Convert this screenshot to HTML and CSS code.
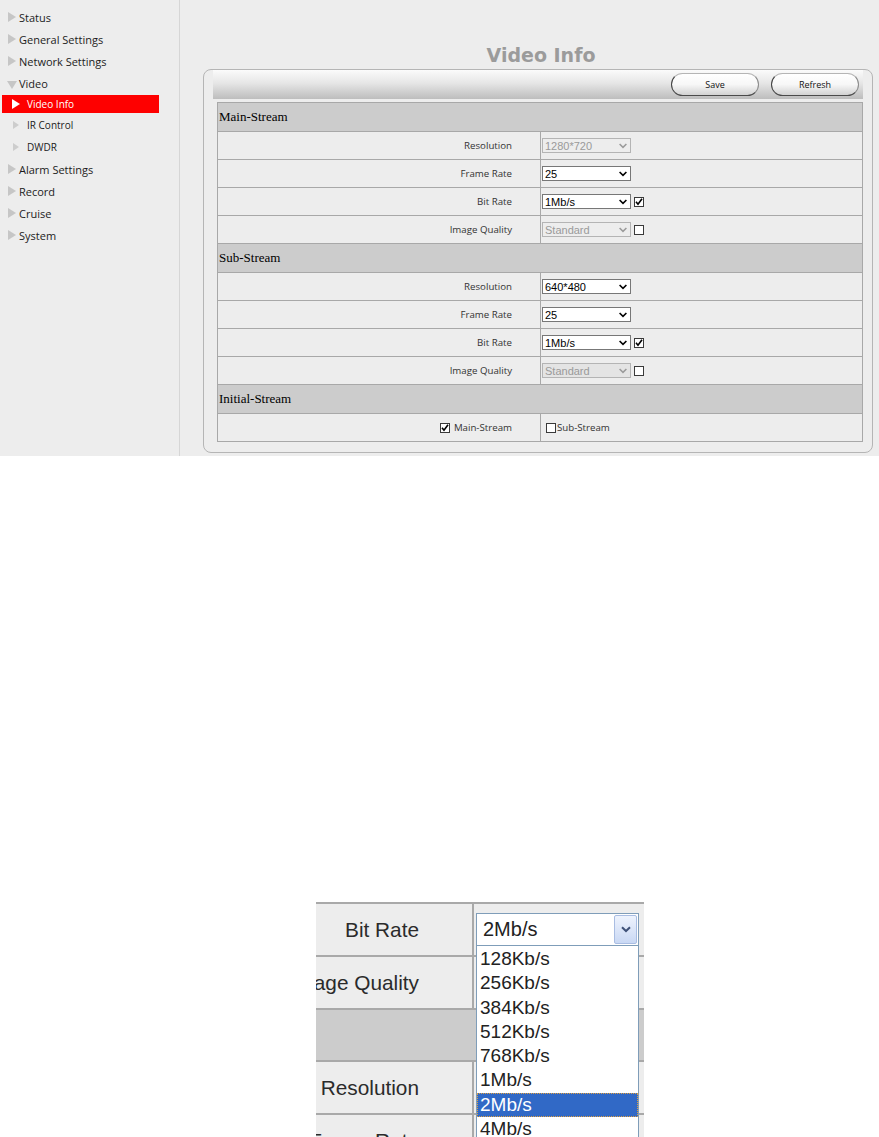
FILE: index.html
```html
<!DOCTYPE html>
<html>
<head>
<meta charset="utf-8">
<title>Video Info</title>
<link rel="stylesheet" href="styles.css">
</head>
<body>
<div class="app">
  <nav class="sidebar">
    <ul class="menu">
      <li class="item"><span class="tri"></span>Status</li>
      <li class="item"><span class="tri"></span>General Settings</li>
      <li class="item"><span class="tri"></span>Network Settings</li>
      <li class="item"><span class="tri tri-down"></span>Video</li>
      <li class="item sub active"><span class="tri"></span>Video Info</li>
      <li class="item sub"><span class="tri"></span>IR Control</li>
      <li class="item sub"><span class="tri"></span>DWDR</li>
      <li class="item"><span class="tri"></span>Alarm Settings</li>
      <li class="item"><span class="tri"></span>Record</li>
      <li class="item"><span class="tri"></span>Cruise</li>
      <li class="item"><span class="tri"></span>System</li>
    </ul>
  </nav>
  <main class="content">
    <h1 class="title">Video Info</h1>
    <section class="panel">
      <div class="toolbar">
        <button class="btn">Save</button>
        <button class="btn">Refresh</button>
      </div>
      <div class="grid">
        <div class="sect">Main-Stream</div>
        <div class="row">
          <div class="lbl">Resolution</div>
          <div class="val"><span class="sel disabled">1280*720<svg class="chev" width="8" height="6" viewBox="0 0 8 6"><path d="M0.6 1 L4 4.4 L7.4 1" fill="none" stroke="#9a9a9a" stroke-width="1.5"/></svg></span></div>
        </div>
        <div class="row">
          <div class="lbl">Frame Rate</div>
          <div class="val"><span class="sel">25<svg class="chev" width="8" height="6" viewBox="0 0 8 6"><path d="M0.6 1 L4 4.4 L7.4 1" fill="none" stroke="#000" stroke-width="1.6"/></svg></span></div>
        </div>
        <div class="row">
          <div class="lbl">Bit Rate</div>
          <div class="val"><span class="sel">1Mb/s<svg class="chev" width="8" height="6" viewBox="0 0 8 6"><path d="M0.6 1 L4 4.4 L7.4 1" fill="none" stroke="#000" stroke-width="1.6"/></svg></span><span class="cb"><svg width="8" height="8" viewBox="0 0 8 8"><path d="M1 3.8 L3 6.3 L7 0.8" fill="none" stroke="#000" stroke-width="1.6"/></svg></span></div>
        </div>
        <div class="row">
          <div class="lbl">Image Quality</div>
          <div class="val"><span class="sel disabled">Standard<svg class="chev" width="8" height="6" viewBox="0 0 8 6"><path d="M0.6 1 L4 4.4 L7.4 1" fill="none" stroke="#9a9a9a" stroke-width="1.5"/></svg></span><span class="cb"></span></div>
        </div>
        <div class="sect">Sub-Stream</div>
        <div class="row">
          <div class="lbl">Resolution</div>
          <div class="val"><span class="sel">640*480<svg class="chev" width="8" height="6" viewBox="0 0 8 6"><path d="M0.6 1 L4 4.4 L7.4 1" fill="none" stroke="#000" stroke-width="1.6"/></svg></span></div>
        </div>
        <div class="row">
          <div class="lbl">Frame Rate</div>
          <div class="val"><span class="sel">25<svg class="chev" width="8" height="6" viewBox="0 0 8 6"><path d="M0.6 1 L4 4.4 L7.4 1" fill="none" stroke="#000" stroke-width="1.6"/></svg></span></div>
        </div>
        <div class="row">
          <div class="lbl">Bit Rate</div>
          <div class="val"><span class="sel">1Mb/s<svg class="chev" width="8" height="6" viewBox="0 0 8 6"><path d="M0.6 1 L4 4.4 L7.4 1" fill="none" stroke="#000" stroke-width="1.6"/></svg></span><span class="cb"><svg width="8" height="8" viewBox="0 0 8 8"><path d="M1 3.8 L3 6.3 L7 0.8" fill="none" stroke="#000" stroke-width="1.6"/></svg></span></div>
        </div>
        <div class="row">
          <div class="lbl">Image Quality</div>
          <div class="val"><span class="sel disabled dim">Standard<svg class="chev" width="8" height="6" viewBox="0 0 8 6"><path d="M0.6 1 L4 4.4 L7.4 1" fill="none" stroke="#9a9a9a" stroke-width="1.5"/></svg></span><span class="cb"></span></div>
        </div>
        <div class="sect">Initial-Stream</div>
        <div class="row">
          <div class="lbl"><span class="cb cb-l"><svg width="8" height="8" viewBox="0 0 8 8"><path d="M1 3.8 L3 6.3 L7 0.8" fill="none" stroke="#000" stroke-width="1.6"/></svg></span>Main-Stream</div>
          <div class="val val-pad"><span class="cb cb-r"></span>Sub-Stream</div>
        </div>
      </div>
    </section>
  </main>
</div>

<div class="detail">
  <div class="d-row">
    <div class="d-lbl">Bit Rate</div>
    <div class="d-val">
      <span class="d-sel">2Mb/s<span class="d-arrow"><svg width="10" height="7" viewBox="0 0 10 7"><path d="M1 1.2 L5 5 L9 1.2" fill="none" stroke="#3f5178" stroke-width="2"/></svg></span></span>
    </div>
  </div>
  <div class="d-row">
    <div class="d-lbl">Image Quality</div>
    <div class="d-val"></div>
  </div>
  <div class="d-sect"></div>
  <div class="d-row">
    <div class="d-lbl">Resolution</div>
    <div class="d-val"></div>
  </div>
  <div class="d-row">
    <div class="d-lbl">Frame Rate</div>
    <div class="d-val"></div>
  </div>
  <ul class="d-list">
    <li>128Kb/s</li>
    <li>256Kb/s</li>
    <li>384Kb/s</li>
    <li>512Kb/s</li>
    <li>768Kb/s</li>
    <li>1Mb/s</li>
    <li class="on">2Mb/s</li>
    <li>4Mb/s</li>
    <li>6Mb/s</li>
  </ul>
</div>
</body>
</html>
```

FILE: styles.css
```css
* { box-sizing: border-box; }
html, body { margin: 0; padding: 0; background: #fff; }
body {
  width: 879px;
  height: 1137px;
  overflow: hidden;
  font-family: "Open Sans", "Noto Sans", sans-serif;
}

/* ---------- top application ---------- */
.app {
  display: flex;
  height: 456px;
  background: #ededed;
}
.sidebar {
  width: 180px;
  flex: none;
  border-right: 1px solid #d6d6d6;
  padding-top: 6px;
}
.menu { list-style: none; margin: 0; padding: 0; }
.item {
  display: flex;
  align-items: center;
  height: 22px;
  padding-left: 8px;
  font-size: 11px;
  color: #1c1c1c;
  white-space: nowrap;
}
.tri {
  width: 0;
  height: 0;
  border-left: 8px solid #c6c6c6;
  border-top: 5px solid transparent;
  border-bottom: 5px solid transparent;
  margin-right: 3px;
}
.tri-down {
  border-left: 5px solid transparent;
  border-right: 5px solid transparent;
  border-top: 8px solid #c6c6c6;
  border-bottom: 0;
  margin: 3px 2px 0 -1px;
}
.item.sub { padding-left: 13px; font-size: 10px; }
.item.sub .tri {
  border-left: 6px solid #cdcdcd;
  border-top-width: 4.5px;
  border-bottom-width: 4.5px;
  margin-right: 8px;
}
.item.active {
  height: 18px;
  margin: 1px 20px 1px 2px;
  padding-left: 10px;
  background: #fe0000;
  color: #fff;
}
.item.active .tri {
  border-left: 8px solid #fff;
  border-top-width: 5px;
  border-bottom-width: 5px;
  margin-right: 7px;
}

.content {
  flex: 1;
  padding: 46px 6px 0 23px;
}
.title {
  margin: 0 0 4px;
  padding-left: 6px;
  font: bold 19px/19px "DejaVu Sans", "Liberation Sans", sans-serif;
  color: #9b9b9b;
  text-align: center;
}
.panel {
  height: 384px;
  border: 1px solid #b5b5b5;
  border-radius: 8px;
  padding: 0 9px;
}
.toolbar {
  height: 29px;
  display: flex;
  justify-content: flex-end;
  align-items: center;
  gap: 12px;
  padding-right: 4px;
  background: linear-gradient(#fbfbfb, #e6e6e6 45%, #bdbdbd);
}
.btn {
  width: 88px;
  height: 23px;
  padding: 0;
  border: 1px solid #8a8a8a;
  border-left-color: #3e3e3e;
  border-bottom-color: #4a4a4a;
  border-top-color: #b5b5b5;
  border-radius: 12px;
  background: linear-gradient(#ffffff, #f7f7f7 50%, #d2d2d2);
  font-family: "Open Sans", "Noto Sans", sans-serif;
  font-size: 9px;
  color: #111;
}

.grid {
  margin: 3px 0 0 4px;
  border: 1px solid #a8a8a8;
  border-bottom: 0;
}
.sect {
  height: 29px;
  border-bottom: 1px solid #a8a8a8;
  background: #cccccc;
  display: flex;
  align-items: center;
  padding-left: 1px;
  font: 13px "Liberation Serif", "Times New Roman", serif;
  color: #000;
}
.row {
  height: 28px;
  display: grid;
  grid-template-columns: 323px 1fr;
  border-bottom: 1px solid #a8a8a8;
}
.lbl {
  border-right: 1px solid #a8a8a8;
  display: flex;
  align-items: center;
  justify-content: flex-end;
  padding-right: 28px;
  font-size: 9.7px;
  color: #333;
}
.val {
  display: flex;
  align-items: center;
  padding-left: 1px;
  font-size: 9.7px;
  color: #333;
}
.val-pad { padding-left: 5px; }
.sel {
  width: 89px;
  height: 15px;
  display: flex;
  align-items: center;
  justify-content: space-between;
  padding: 0 2px 0 2px;
  border: 1px solid #777;
  background: #fff;
  font: 11px "Liberation Sans", Arial, sans-serif;
  color: #000;
}
.sel .chev { margin-right: 1px; }
.sel.disabled {
  border-color: #b4b4b4;
  background: #ededed;
  color: #9a9a9a;
}
.sel.dim { background: #e4e4e4; }
.cb {
  width: 10px;
  height: 10px;
  margin-left: 3px;
  border: 1px solid #3a3a3a;
  background: #fff;
  display: flex;
  align-items: center;
  justify-content: center;
}
.cb-l { margin: 0 4px 0 0; }
.cb-r { margin: 0 1px 0 0; }

/* ---------- enlarged detail ---------- */
.detail {
  position: relative;
  width: 328px;
  height: 235px;
  margin: 446px 0 0 316px;
  overflow: hidden;
  background: #ededed;
  border-top: 2px solid #a9a9a9;
  font-family: "Liberation Sans", Arial, sans-serif;
}
.d-row {
  height: 53px;
  display: grid;
  grid-template-columns: 158px 1fr;
  border-bottom: 2px solid #a9a9a9;
}
.d-sect {
  height: 52px;
  background: #cccccc;
  border-bottom: 2px solid #a9a9a9;
}
.d-lbl {
  border-right: 2px solid #a9a9a9;
  display: flex;
  align-items: center;
  justify-content: flex-end;
  padding-right: 53px;
  font-size: 20.8px;
  color: #2b2b2b;
  white-space: nowrap;
}
.d-val {
  display: flex;
  align-items: center;
  padding-left: 2px;
}
.d-sel {
  width: 163px;
  height: 33px;
  display: flex;
  align-items: center;
  justify-content: space-between;
  padding: 0 1px 0 6px;
  border: 1px solid #7f9db9;
  background: #fff;
  font-size: 20px;
  color: #222;
}
.d-arrow {
  width: 23px;
  height: 29px;
  display: flex;
  align-items: center;
  justify-content: center;
  border: 1px solid #a9bde2;
  border-radius: 2px;
  background: linear-gradient(#eef3fd, #c9d8f4);
}
.d-list {
  position: absolute;
  left: 160px;
  top: 41px;
  width: 163px;
  height: 220px;
  margin: 0;
  padding: 1px 0 0;
  list-style: none;
  border: 1px solid #7f9db9;
  background: #fff;
}
.d-list li {
  height: 24.3px;
  line-height: 24px;
  padding-left: 3px;
  font-size: 19px;
  color: #222;
}
.d-list li.on {
  background: #3169c6;
  color: #fff;
  outline: 1px dotted #e0a040;
  outline-offset: -1px;
}
```
